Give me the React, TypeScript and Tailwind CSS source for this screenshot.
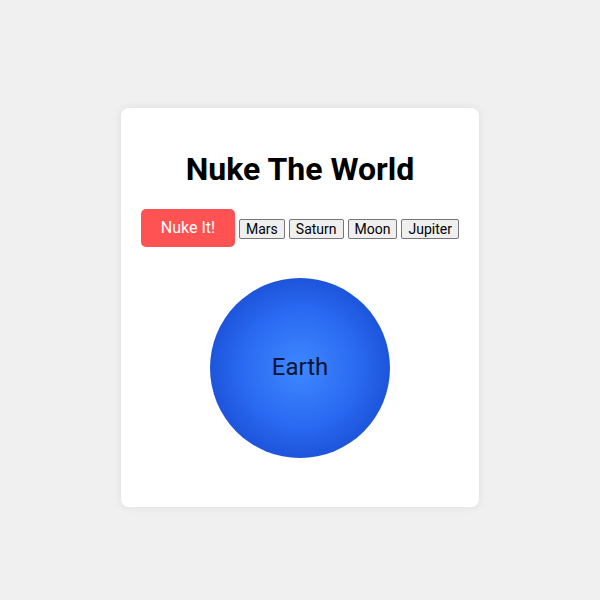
import React from "react";

const planets = ["Mars", "Saturn", "Moon", "Jupiter"];

export default function App() {
  return (
    <div
      className="min-h-[600px] w-full bg-[#f0f0f0] flex items-start justify-center pt-[108px]"
      style={{ fontFamily: "Roboto, 'Noto Sans', sans-serif" }}
    >
      <div className="w-[358px] h-[399px] bg-white rounded-[8px] shadow-[0_0_10px_rgba(0,0,0,0.08)] px-[20px] pt-[20px] flex flex-col items-center">
        <h1 className="mt-[23px] text-[32px] leading-[37px] font-bold text-black">
          Nuke The World
        </h1>
        <div className="mt-[21px] flex items-center gap-[4px]">
          <button className="h-[38px] w-[94px] rounded-[5px] bg-[#ff5252] text-white text-[16px] leading-[18px]">
            Nuke It!
          </button>
          {planets.map((p) => (
            <button
              key={p}
              className="mt-[2px] h-[20px] px-[6px] border border-[#767676] rounded-[2px] bg-[#efefef] text-[14px] leading-[16px] text-black"
            >
              {p}
            </button>
          ))}
        </div>
        {/* globe: bright core fading to a darker rim */}
        <div className="mt-[31px] w-[180px] h-[180px] rounded-full flex items-center justify-center pb-[3px] bg-[radial-gradient(circle,#3f88ff_0%,#2a6af2_45%,#1a50d6_76%,#0b3594_100%)]">
          <span className="text-[24px] leading-[28px] text-[#0a1533]">Earth</span>
        </div>
      </div>
    </div>
  );
}
